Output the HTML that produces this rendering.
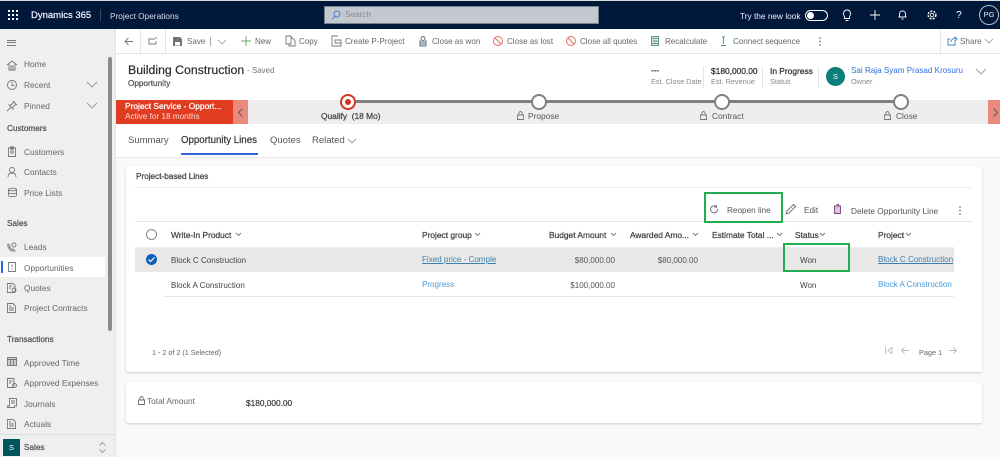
<!DOCTYPE html>
<html><head><meta charset="utf-8"><style>
html,body{margin:0;padding:0}
body{width:1000px;height:457px;overflow:hidden;position:relative;background:#faf9f8;font-family:"Liberation Sans",sans-serif;font-size:8.2px;color:#444}
#w{position:absolute;left:0;top:0;width:1000px;height:457px;overflow:hidden;filter:blur(.3px)}
.a{position:absolute}
.t{position:absolute;white-space:nowrap;line-height:12px;height:12px}
.b{-webkit-text-stroke:.25px currentColor}
.nav{color:#666;font-size:8.3px}
.h{color:#444;font-size:8.4px}
.tb{color:#666;font-size:8.05px}
.r{font-size:8.05px}
.lnk{color:#4a9bd9;font-size:8.05px}
.u{text-decoration:underline;color:#3d7fae;font-size:8.05px}
svg{position:absolute;overflow:visible;fill:none;stroke:#777;stroke-width:.9}
</style></head><body><div id="w">
<div class="a" style="left:0;top:0;width:1000px;height:1px;background:#ddd"></div>
<div class="a" style="left:0;top:1px;width:1000px;height:28px;background:#00183a"></div>
<svg style="left:8px;top:10px" width="10" height="10"><g fill="#fff" stroke="none"><rect width="2" height="2"/><rect x="4" width="2" height="2"/><rect x="8" width="2" height="2"/><rect y="4" width="2" height="2"/><rect x="4" y="4" width="2" height="2"/><rect x="8" y="4" width="2" height="2"/><rect y="8" width="2" height="2"/><rect x="4" y="8" width="2" height="2"/><rect x="8" y="8" width="2" height="2"/></g></svg>
<div class="t" style="left:31px;top:10px;color:#eef;font-size:9.5px;-webkit-text-stroke:.2px #fff">Dynamics 365</div>
<div class="a" style="left:100px;top:9px;width:1px;height:12px;background:#445"></div>
<div class="t" style="left:110px;top:10px;color:#dde;font-size:8.3px">Project Operations</div>
<div class="a" style="left:324px;top:6px;width:275px;height:18px;background:#c4c8cf;border:1px solid #76808e;box-sizing:border-box"></div>
<svg style="left:331px;top:10px;stroke:#3f7fd0" width="10" height="10"><circle cx="6" cy="4" r="3"/><path d="M4 6L1 9.500"/></svg>
<div class="t" style="left:345px;top:9px;color:#889;font-size:8.2px">Search</div>
<div class="t" style="left:740px;top:10px;color:#eef;font-size:8.3px">Try the new look</div>
<div class="a" style="left:805px;top:10px;width:21px;height:9px;border:1px solid #fff;border-radius:6px"></div>
<div class="a" style="left:807px;top:12px;width:7px;height:7px;border-radius:50%;background:#fff"></div>
<svg style="left:842px;top:9px;stroke:#fff" width="10" height="12"><path d="M2.500 7.500C.5 5 1.800 1 5 1S9.500 5 7.500 7.500V9.500H2.500ZM3.500 11.500H6.500"/></svg>
<svg style="left:870px;top:10px;stroke:#fff" width="10" height="10"><path d="M5 0V10M0 5H10"/></svg>
<svg style="left:898px;top:10px;stroke:#fff" width="9" height="10"><path d="M1.500 7V4C1.500 2 3 1 4.500 1S7.500 2 7.500 4V7ZM.5 7H8.500M3.500 9H5.500"/></svg>
<svg style="left:927px;top:10px;stroke:#fff" width="10" height="10"><circle cx="5" cy="5" r="1.800"/><circle cx="5" cy="5" r="3.900" stroke-width="1.400" stroke-dasharray="2 1.300"/></svg>
<div class="t" style="left:956px;top:9px;color:#fff;font-size:10.5px">?</div>
<div class="a" style="left:979px;top:5px;width:18px;height:18px;border:1px solid #bbc;border-radius:50%;color:#eef;font-size:7.5px;line-height:18px;text-align:center">PG</div>

<!-- toolbar -->
<div class="a" style="left:116px;top:29px;width:884px;height:24px;background:#fff;border-bottom:1px solid #e4e4e4"></div>
<div class="a" style="left:140px;top:29px;width:1px;height:24px;background:#e6e6e6"></div>
<div class="a" style="left:165px;top:29px;width:1px;height:24px;background:#e6e6e6"></div>
<div class="a" style="left:940px;top:29px;width:1px;height:24px;background:#e6e6e6"></div>
<svg style="left:124px;top:37px" width="9" height="9"><path d="M9 4.500H1M4.500 1L1 4.500L4.500 8"/></svg>
<svg style="left:148px;top:36px" width="10" height="9"><path d="M7 3H1V8H8V5M8 1V3"/></svg>
<svg style="left:173px;top:37px" width="9" height="9"><path fill="#6a7580" stroke="none" d="M0 0H7L9 2V9H0Z"/><rect x="2" y="5" width="5" height="3.500" fill="#fff" stroke="none"/></svg>
<div class="t tb" style="left:187px;top:36px">Save</div>
<div class="a" style="left:210px;top:37px;width:1px;height:9px;background:#aaa"></div>
<svg style="left:218px;top:40px;stroke:#aaa" width="8" height="5"><path d="M0 0L4 4L8 0"/></svg>
<svg style="left:241px;top:36px;stroke:#5aa864" width="10" height="10"><path d="M5 0V10M0 5H10"/></svg>
<div class="t tb" style="left:255px;top:36px">New</div>
<svg style="left:286px;top:36px" width="9" height="10"><path d="M0 0H5V8H0ZM5 2H6.500L9 4.500V10H3V8"/></svg>
<div class="t tb" style="left:299px;top:36px">Copy</div>
<svg style="left:332px;top:36px" width="9" height="10"><path d="M6 0H0V10H9V4H3V7H9"/></svg>
<div class="t tb" style="left:345px;top:36px">Create P-Project</div>
<svg style="left:419px;top:36px;stroke:#5a6a78" width="8" height="10"><circle cx="4" cy="2.500" r="2"/><path d="M1 4V10H7V4M1 6H7M1 8H7"/></svg>
<div class="t tb" style="left:432px;top:36px">Close as won</div>
<svg style="left:493px;top:36px;stroke:#e0685a" width="10" height="10"><circle cx="5" cy="5" r="4.500"/><path d="M2 2L8 8"/></svg>
<div class="t tb" style="left:507px;top:36px">Close as lost</div>
<svg style="left:566px;top:36px;stroke:#e0685a" width="10" height="10"><circle cx="5" cy="5" r="4.500"/><path d="M2 2L8 8"/></svg>
<div class="t tb" style="left:580px;top:36px">Close all quotes</div>
<svg style="left:651px;top:36px;stroke:#5a8c7c" width="8" height="10"><rect x=".5" y=".5" width="7" height="9" fill="#dfe9e4"/><path d="M1.500 2.500H6.500M1.500 5H6.500M1.500 7.500H6.500"/></svg>
<div class="t tb" style="left:665px;top:36px">Recalculate</div>
<svg style="left:720px;top:36px;stroke:#3d9a78" width="7" height="10"><path d="M3.500 1V8M1 9.500H6M2 1H5"/></svg>
<div class="t tb" style="left:733px;top:36px">Connect sequence</div>
<svg style="left:819px;top:37px;stroke:none;fill:#555" width="2" height="9"><circle cx="1" cy="1" r=".8"/><circle cx="1" cy="4.500" r=".8"/><circle cx="1" cy="8" r=".8"/></svg>
<svg style="left:947px;top:36px;stroke:#3f7fc0" width="10" height="10"><path d="M3 3H1V9H8V6M4 6C4 3.500 6 2.500 8 2.500V1L10 3L8 5V3.800"/></svg>
<div class="t tb" style="left:960px;top:36px">Share</div>
<svg style="left:985px;top:39px;stroke:#aaa" width="8" height="5"><path d="M0 0L4 4L8 0"/></svg>

<!-- sidebar -->
<div class="a" style="left:0;top:29px;width:116px;height:428px;background:#efefef;border-right:1px solid #e2e2e2;box-sizing:border-box"></div>
<div class="a" style="left:7px;top:40px;width:9px;height:4px;border-top:1px solid #777;border-bottom:1px solid #777"></div>
<div class="a" style="left:7px;top:42px;width:9px;height:1px;background:#777"></div>
<div class="a" style="left:108px;top:57px;width:4px;height:274px;background:#8a8a8a;border-radius:2px"></div>

<svg style="left:7px;top:60px" width="10" height="10"><path d="M0 5L5 1L10 5M2 4V10H8V4M4 10V6H6V10"/></svg>
<div class="t nav" style="left:24px;top:58px">Home</div>
<svg style="left:7px;top:80px" width="10" height="10"><circle cx="5" cy="5" r="4.500"/><path d="M5 2V5.500H7.500"/></svg>
<div class="t nav" style="left:24px;top:79px">Recent</div>
<svg style="left:87px;top:82px;stroke:#999" width="10" height="6"><path d="M0 0L5 5L10 0"/></svg>
<svg style="left:7px;top:101px" width="10" height="10"><path d="M6 0L10 4M7 1L4 4H2L6 8V6L9 3M4 6L0 10"/></svg>
<div class="t nav" style="left:24px;top:100px">Pinned</div>
<svg style="left:87px;top:103px;stroke:#999" width="10" height="6"><path d="M0 0L5 5L10 0"/></svg>
<div class="t b" style="left:7px;top:123px;color:#555">Customers</div>
<svg style="left:8px;top:146px" width="8" height="11"><path d="M.5 2H7.500V10.500H.5ZM2.500 1H5.500V3H2.500Z"/><circle cx="4" cy="6" r="1.300"/></svg>
<div class="t nav" style="left:24px;top:146px">Customers</div>
<svg style="left:7px;top:167px" width="10" height="10"><circle cx="5" cy="3" r="2.500"/><path d="M1 10C1 7 3 6 5 6S9 7 9 10"/></svg>
<div class="t nav" style="left:24px;top:166px">Contacts</div>
<svg style="left:8px;top:188px" width="9" height="9"><ellipse cx="4.500" cy="1.500" rx="4" ry="1.300"/><path d="M.5 1.500V7.500C.5 9 8.500 9 8.500 7.500V1.500M.5 4.500C.5 6 8.500 6 8.500 4.500"/></svg>
<div class="t nav" style="left:24px;top:187px">Price Lists</div>
<div class="t b" style="left:7px;top:218px;color:#555">Sales</div>
<svg style="left:7px;top:242px" width="10" height="10"><path d="M1 2C0 6 4 10 8 9L6.500 7L5 7.500L2.500 5L3 3.500Z"/><circle cx="7" cy="3" r="2"/></svg>
<div class="t nav" style="left:24px;top:241px">Leads</div>
<div class="a" style="left:0;top:257px;width:105px;height:20px;background:#fff"></div>
<div class="a" style="left:1px;top:261px;width:2px;height:12px;background:#2266e3"></div>
<svg style="left:8px;top:262px" width="8" height="10"><path d="M.5 .5H7.500V9.500H.5ZM4 2.500V5.500M4 6.800V7.800"/></svg>
<div class="t nav" style="left:24px;top:262px">Opportunities</div>
<svg style="left:7px;top:283px" width="10" height="10"><path d="M.5 .5H6L8 2.500V9.500H.5ZM2 3H5M2 5H4"/><circle cx="7" cy="7" r="2"/></svg>
<div class="t nav" style="left:24px;top:282px">Quotes</div>
<svg style="left:7px;top:303px" width="9" height="10"><path d="M.5 .5H6L8.500 3V9.500H.5ZM2 5H7M2 7H7M2 3H4"/></svg>
<div class="t nav" style="left:24px;top:302px">Project Contracts</div>
<div class="t b" style="left:7px;top:334px;color:#555">Transactions</div>
<svg style="left:7px;top:357px" width="10" height="9"><rect x=".5" y=".5" width="9" height="8" fill="#ccc"/><path d="M3.500 3V8M6.500 3V8M.5 2.500H9.500"/></svg>
<div class="t nav" style="left:24px;top:357px">Approved Time</div>
<svg style="left:7px;top:378px" width="10" height="10"><path d="M.5 .5H7V9.500H.5ZM2 3H5.500M2 5H4"/><circle cx="7.500" cy="7.500" r="2"/></svg>
<div class="t nav" style="left:24px;top:377px">Approved Expenses</div>
<svg style="left:7px;top:398px" width="10" height="10"><path d="M2.500 .5H9.500V8H7.500V9.500H.5V8H2.500ZM4 3H8M4 5H8"/></svg>
<div class="t nav" style="left:24px;top:398px">Journals</div>
<svg style="left:7px;top:419px" width="9" height="10"><path d="M.5 .5H6L8.500 3V9.500H.5ZM2 5H7M2 7H7M2 3H4"/></svg>
<div class="t nav" style="left:24px;top:418px">Actuals</div>
<div class="a" style="left:0;top:434px;width:115px;height:1px;background:#ddd"></div>
<div class="a" style="left:3px;top:439px;width:17px;height:17px;background:#00565c;color:#fff;font-size:7.5px;line-height:17px;text-align:center">S</div>
<div class="t b" style="left:24px;top:442px;color:#555">Sales</div>
<svg style="left:99px;top:442px;stroke:#999" width="7" height="11"><path d="M.5 3.500L3.500 .5L6.500 3.500M.5 7.500L3.500 10.500L6.500 7.500"/></svg>

<!-- header -->
<div class="a" style="left:116px;top:54px;width:884px;height:103px;background:#fff;border-bottom:1px solid #e8e8e8"></div>
<div class="t" style="left:128px;top:64px;color:#2a2a2a;font-size:12.3px;-webkit-text-stroke:.2px #2a2a2a">Building Construction</div>
<div class="t" style="left:247px;top:65px;color:#777;font-size:8px">- Saved</div>
<div class="t b" style="left:128px;top:78px;color:#555;font-size:8.2px">Opportunity</div>
<div class="t b" style="left:651px;top:65px;color:#333;font-size:8.2px">---</div>
<div class="t" style="left:651px;top:76px;color:#888;font-size:7.3px">Est. Close Date</div>
<div class="a" style="left:703px;top:66px;width:1px;height:22px;background:#e4e4e4"></div>
<div class="t b" style="left:711px;top:65px;color:#333;font-size:8.4px">$180,000.00</div>
<div class="t" style="left:711px;top:76px;color:#888;font-size:7.3px">Est. Revenue</div>
<div class="a" style="left:762px;top:66px;width:1px;height:22px;background:#e4e4e4"></div>
<div class="t b" style="left:770px;top:65px;color:#333;font-size:8.4px">In Progress</div>
<div class="t" style="left:770px;top:76px;color:#888;font-size:7.3px">Status</div>
<div class="a" style="left:818px;top:66px;width:1px;height:22px;background:#e4e4e4"></div>
<div class="a" style="left:826px;top:67px;width:19px;height:19px;border-radius:50%;background:#0a7f7a;color:#fff;font-size:7.5px;line-height:19px;text-align:center">S</div>
<div class="t" style="left:851px;top:65px;color:#2a6fe0;font-size:8.1px">Sai Raja Syam Prasad Krosuru</div>
<div class="t" style="left:851px;top:76px;color:#888;font-size:7.3px">Owner</div>
<svg style="left:976px;top:69px;stroke:#999" width="10" height="6"><path d="M0 0L5 5L10 0"/></svg>

<!-- BPF -->
<div class="a" style="left:248px;top:100px;width:752px;height:24px;background:#eeeeee"></div>
<div class="a" style="left:116px;top:100px;width:117px;height:24px;background:#e03c22"></div>
<div class="a" style="left:233px;top:100px;width:15px;height:24px;background:#e98a7c"></div>
<div class="a" style="left:988px;top:100px;width:12px;height:24px;background:#e98a7c"></div>
<svg style="left:238px;top:108px;stroke:#555" width="5" height="9"><path d="M4.500 .5L.5 4.500L4.500 8.500"/></svg>
<svg style="left:993px;top:108px;stroke:#555" width="5" height="9"><path d="M.5 .5L4.500 4.500L.5 8.500"/></svg>
<div class="t b" style="left:125px;top:100px;color:#fff;font-size:8.4px">Project Service - Opport...</div>
<div class="t" style="left:125px;top:111px;color:#fbd9d2;font-size:8.2px">Active for 18 months</div>
<div class="a" style="left:356px;top:100px;width:545px;height:3px;background:#808080"></div>
<div class="a" style="left:340px;top:94px;width:16px;height:16px;box-sizing:border-box;border:2.5px solid #d7321f;border-radius:50%;background:#fff"></div>
<div class="a" style="left:345px;top:99px;width:6px;height:6px;border-radius:50%;background:#d7321f"></div>
<div class="a" style="left:531px;top:94px;width:16px;height:16px;box-sizing:border-box;border:2px solid #808080;border-radius:50%;background:#fff"></div>
<div class="a" style="left:714px;top:94px;width:16px;height:16px;box-sizing:border-box;border:2px solid #808080;border-radius:50%;background:#fff"></div>
<div class="a" style="left:893px;top:94px;width:16px;height:16px;box-sizing:border-box;border:2px solid #808080;border-radius:50%;background:#fff"></div>
<div class="t b" style="left:321px;top:110px;color:#444;font-size:8.4px">Qualify&nbsp; (18 Mo)</div>
<svg style="left:517px;top:111px" width="7" height="9"><path d="M.5 4H6.500V8.500H.5ZM1.800 4V2.500C1.800 0 5.200 0 5.200 2.500V4"/></svg>
<div class="t" style="left:528px;top:110px;color:#555;font-size:8.4px">Propose</div>
<svg style="left:700px;top:111px" width="7" height="9"><path d="M.5 4H6.500V8.500H.5ZM1.800 4V2.500C1.800 0 5.200 0 5.200 2.500V4"/></svg>
<div class="t" style="left:712px;top:110px;color:#555;font-size:8.4px">Contract</div>
<svg style="left:884px;top:111px" width="7" height="9"><path d="M.5 4H6.500V8.500H.5ZM1.800 4V2.500C1.800 0 5.200 0 5.200 2.500V4"/></svg>
<div class="t" style="left:896px;top:110px;color:#555;font-size:8.4px">Close</div>

<!-- tabs -->
<div class="t" style="left:128px;top:135px;color:#555;font-size:9.5px">Summary</div>
<div class="t" style="left:181px;top:135px;color:#333;font-size:9.7px;-webkit-text-stroke:.2px #333">Opportunity Lines</div>
<div class="a" style="left:181px;top:153px;width:77px;height:1.5px;background:#2f66d8"></div>
<div class="t" style="left:270px;top:135px;color:#555;font-size:9.5px">Quotes</div>
<div class="t" style="left:312px;top:135px;color:#555;font-size:9.5px">Related</div>
<svg style="left:348px;top:139px;stroke:#999" width="8" height="5"><path d="M0 0L4 4L8 0"/></svg>

<!-- card 1 -->
<div class="a" style="left:126px;top:166px;width:856px;height:206px;background:#fff;border-radius:2px;box-shadow:0 1px 2px rgba(0,0,0,.18)"></div>
<div class="t b" style="left:136px;top:171px;color:#444;font-size:8.2px">Project-based Lines</div>
<div class="a" style="left:135px;top:187px;width:838px;height:1px;background:#eee"></div>
<div class="a" style="left:135px;top:221px;width:838px;height:1px;background:#e4e4e4"></div>
<div class="a" style="left:135px;top:247px;width:819px;height:1px;background:#eee"></div>
<div class="a" style="left:135px;top:248px;width:819px;height:24px;background:#eae8e6"></div>
<div class="a" style="left:164px;top:296px;width:790px;height:1px;background:#e8e8e8"></div>

<svg style="left:710px;top:205px;stroke:#666" width="8" height="8"><path d="M6 1.500A3.500 3.500 0 1 0 7.500 4M6.500 0V2H4.500"/></svg>
<div class="t r" style="left:727px;top:205px;color:#555;font-size:8.2px">Reopen line</div>
<svg style="left:786px;top:204px;stroke:#666" width="10" height="10"><path d="M0 10L1 7L7.500 .5L9.500 2.500L3 9Z"/></svg>
<div class="t r" style="left:804px;top:205px;color:#555;font-size:8.2px">Edit</div>
<svg style="left:834px;top:204px;stroke:#7a3f7a" width="7" height="10"><path d="M.5 2H6.500V9.500H.5ZM2.500 .5H4.500V2" fill="#d8c8d8"/></svg>
<div class="t r" style="left:851px;top:205px;color:#555;font-size:8.3px">Delete Opportunity Line</div>
<svg style="left:959px;top:206px;stroke:none;fill:#555" width="2" height="9"><circle cx="1" cy="1" r=".8"/><circle cx="1" cy="4.500" r=".8"/><circle cx="1" cy="8" r=".8"/></svg>

<div class="a" style="left:146px;top:229px;width:9px;height:9px;border:1px solid #888;border-radius:50%;background:#fff"></div>
<div class="t b h" style="left:171px;top:229px">Write-In Product</div>
<svg style="left:236px;top:233px" width="5" height="3"><path d="M0 0L2.500 2.500L5 0"/></svg>
<div class="t b h" style="left:422px;top:229px">Project group</div>
<svg style="left:475px;top:233px" width="5" height="3"><path d="M0 0L2.500 2.500L5 0"/></svg>
<div class="t b h" style="left:549px;top:229px">Budget Amount</div>
<svg style="left:611px;top:233px" width="5" height="3"><path d="M0 0L2.500 2.500L5 0"/></svg>
<div class="t b h" style="left:630px;top:229px">Awarded Amo...</div>
<svg style="left:693px;top:233px" width="5" height="3"><path d="M0 0L2.500 2.500L5 0"/></svg>
<div class="t b h" style="left:712px;top:229px">Estimate Total ...</div>
<svg style="left:777px;top:233px" width="5" height="3"><path d="M0 0L2.500 2.500L5 0"/></svg>
<div class="t b h" style="left:795px;top:229px">Status</div>
<svg style="left:820px;top:233px" width="5" height="3"><path d="M0 0L2.500 2.500L5 0"/></svg>
<div class="t b h" style="left:878px;top:229px">Project</div>
<svg style="left:906px;top:233px" width="5" height="3"><path d="M0 0L2.500 2.500L5 0"/></svg>

<div class="a" style="left:146px;top:254px;width:11px;height:11px;border-radius:50%;background:#0f5fb8"></div>
<svg style="left:148px;top:257px;stroke:#fff;stroke-width:1.2" width="7" height="5"><path d="M.5 2.500L2.500 4.500L6.500 .5"/></svg>
<div class="t r" style="left:171px;top:255px;color:#444">Block C Construction</div>
<div class="t u" style="left:422px;top:254px">Fixed price - Comple</div>
<div class="t r" style="left:500px;top:255px;width:115px;text-align:right;color:#555">$80,000.00</div>
<div class="t r" style="left:583px;top:255px;width:115px;text-align:right;color:#555">$80,000.00</div>
<div class="t r" style="left:800px;top:255px;color:#444">Won</div>
<div class="a" style="left:878px;top:254px;width:76px;height:13px;overflow:hidden"><span class="t u" style="left:0;top:0">Block C Construction</span></div>

<div class="t r" style="left:171px;top:280px;color:#444">Block A Construction</div>
<div class="t lnk" style="left:422px;top:279px">Progress</div>
<div class="t r" style="left:500px;top:280px;width:115px;text-align:right;color:#555">$100,000.00</div>
<div class="t r" style="left:800px;top:280px;color:#444">Won</div>
<div class="a" style="left:878px;top:279px;width:76px;height:12px;overflow:hidden"><span class="t lnk" style="left:0;top:0">Block A Construction</span></div>

<div class="a" style="left:704px;top:192px;width:79px;height:31px;border:2px solid #22ad4e;box-sizing:border-box"></div>
<div class="a" style="left:783px;top:243px;width:67px;height:29px;border:2px solid #22ad4e;box-sizing:border-box"></div>

<div class="t" style="left:152px;top:347px;color:#666;font-size:7.2px">1 - 2 of 2 (1 Selected)</div>
<svg style="left:885px;top:347px;stroke:#bbb" width="7" height="7"><path d="M.5 0V7M7 .5L3 3.500L7 6.500Z"/></svg>
<svg style="left:901px;top:347px;stroke:#bbb" width="8" height="7"><path d="M8 3.500H.5M3.500 .5L.5 3.500L3.500 6.500"/></svg>
<div class="t" style="left:919px;top:347px;color:#666;font-size:7.3px">Page 1</div>
<svg style="left:949px;top:347px;stroke:#bbb" width="8" height="7"><path d="M0 3.500H7.500M4.500 .5L7.500 3.500L4.500 6.500"/></svg>

<!-- card 2 -->
<div class="a" style="left:126px;top:382px;width:856px;height:41px;background:#fff;border-radius:2px;box-shadow:0 1px 2px rgba(0,0,0,.18)"></div>
<svg style="left:138px;top:396px;stroke:#6a6a7a" width="7" height="9"><path d="M.5 4H6.500V8.500H.5ZM1.800 4V2.500C1.800 0 5.200 0 5.200 2.500V4"/></svg>
<div class="t" style="left:147px;top:395px;color:#666;font-size:8.3px">Total Amount</div>
<div class="t b" style="left:246px;top:397px;color:#444;font-size:8.3px">$180,000.00</div>
</div></body></html>
